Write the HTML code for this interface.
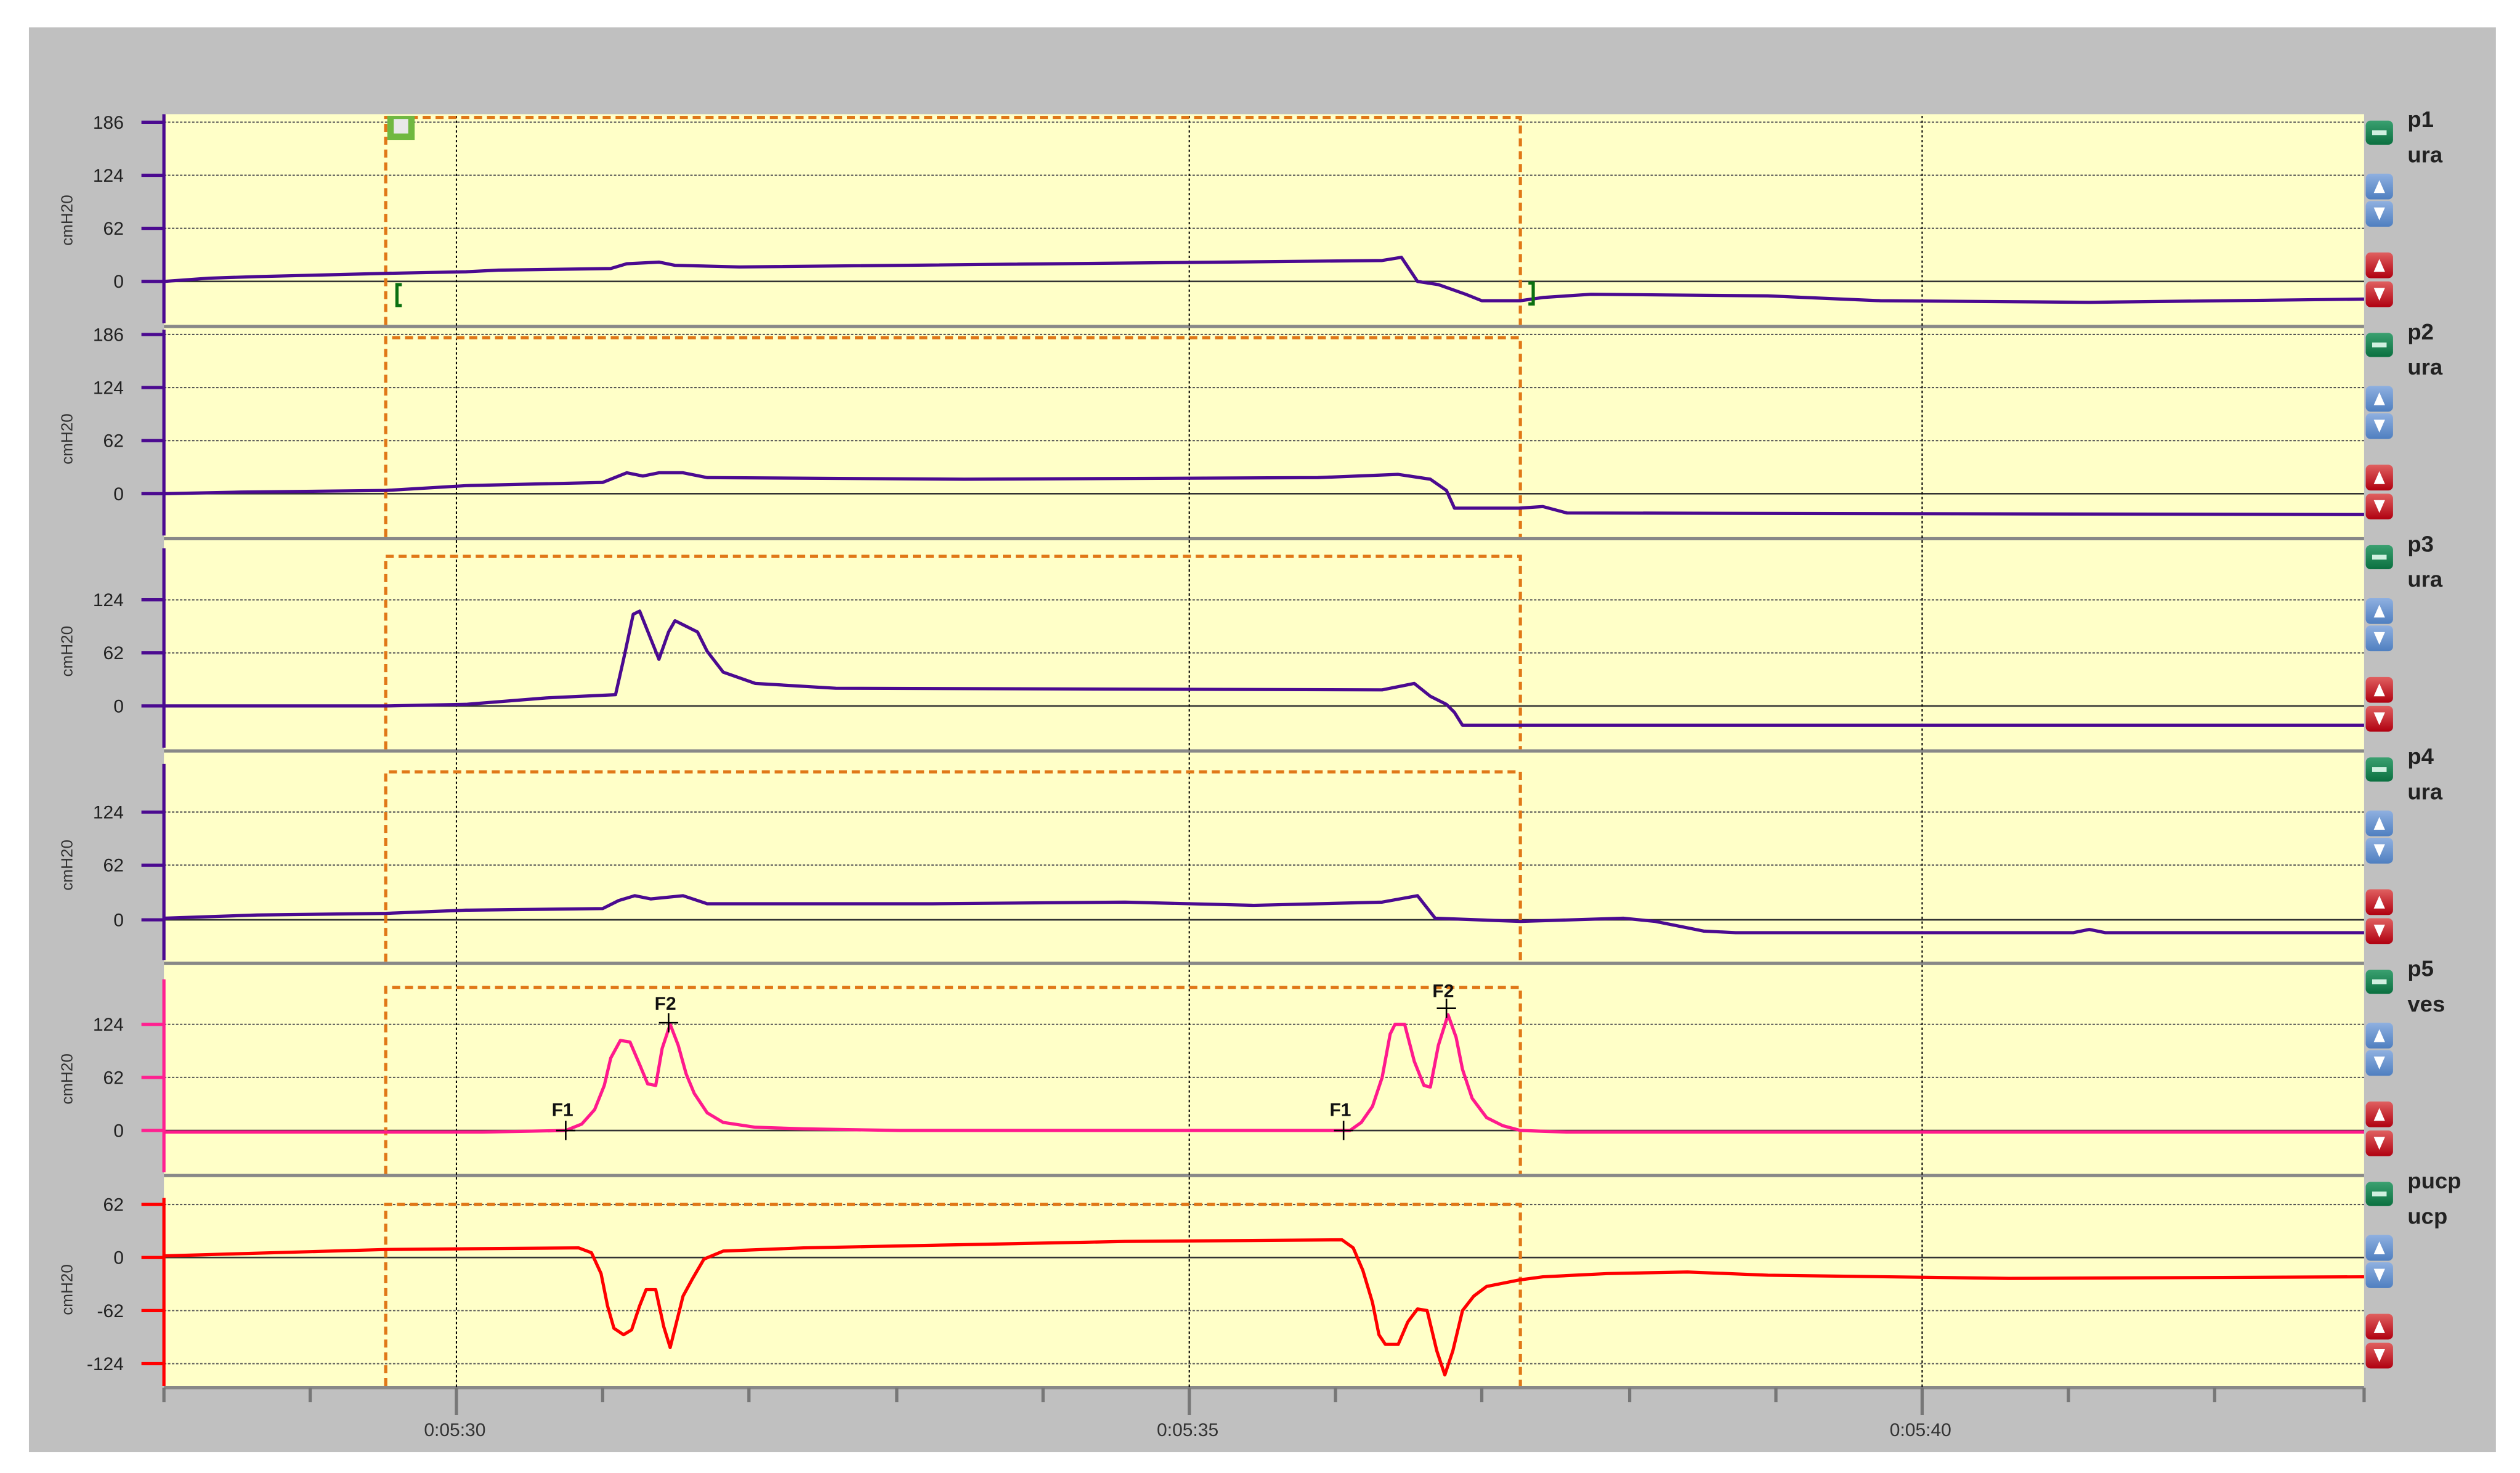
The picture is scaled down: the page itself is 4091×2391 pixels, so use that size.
<!DOCTYPE html>
<html><head><meta charset="utf-8"><style>
html,body{margin:0;padding:0;background:#fff;}
svg{display:block;}
text{font-family:"Liberation Sans",sans-serif;}
</style></head><body>
<svg width="4091" height="2391" viewBox="0 0 1568 916" preserveAspectRatio="none" xmlns="http://www.w3.org/2000/svg">
<defs>
<linearGradient id="gg" x1="0" y1="0" x2="0" y2="1"><stop offset="0" stop-color="#3aa070"/><stop offset="1" stop-color="#0b7040"/></linearGradient>
<linearGradient id="bg" x1="0" y1="0" x2="0" y2="1"><stop offset="0" stop-color="#8fb0e0"/><stop offset="1" stop-color="#4f7fc0"/></linearGradient>
<linearGradient id="rg" x1="0" y1="0" x2="0" y2="1"><stop offset="0" stop-color="#e06060"/><stop offset="1" stop-color="#b00010"/></linearGradient>
<g id="btns">
<rect x="1472" y="4" width="17" height="15" rx="3" fill="url(#gg)"/><rect x="1476" y="10" width="9" height="3" fill="#d0f0e0"/>
<rect x="1472" y="37" width="17" height="16" rx="3" fill="url(#bg)"/><path d="M1477 49 L1480.5 41 L1484 49Z" fill="#fff"/>
<rect x="1472" y="54" width="17" height="16" rx="3" fill="url(#bg)"/><path d="M1477 58 L1480.5 66 L1484 58Z" fill="#fff"/>
<rect x="1472" y="86" width="17" height="16" rx="3" fill="url(#rg)"/><path d="M1477 98 L1480.5 90 L1484 98Z" fill="#fff"/>
<rect x="1472" y="104" width="17" height="16" rx="3" fill="url(#rg)"/><path d="M1477 108 L1480.5 116 L1484 108Z" fill="#fff"/>
</g>
<g id="vgrid" stroke="#000" stroke-width="0.8" stroke-dasharray="1.5,1.5">
<line x1="284" y1="0" x2="284" y2="131"/><line x1="740" y1="0" x2="740" y2="131"/><line x1="1196" y1="0" x2="1196" y2="131"/>
</g>
</defs>
<rect x="18" y="17" width="1535" height="886" fill="#c0c0c0"/>
<rect x="102" y="71" width="1369" height="792" fill="#ffffc8"/>

<g stroke="#888" stroke-width="2">
<line x1="102" y1="203" x2="1471" y2="203"/><line x1="102" y1="335" x2="1471" y2="335"/><line x1="102" y1="467" x2="1471" y2="467"/><line x1="102" y1="599" x2="1471" y2="599"/><line x1="102" y1="731" x2="1471" y2="731"/><line x1="102" y1="863" x2="1471" y2="863"/>
</g>

<g stroke="#555" stroke-width="0.8" stroke-dasharray="1.5,1">
<line x1="102" y1="76" x2="1471" y2="76"/><line x1="102" y1="109" x2="1471" y2="109"/><line x1="102" y1="142" x2="1471" y2="142"/>
<line x1="102" y1="208" x2="1471" y2="208"/><line x1="102" y1="241" x2="1471" y2="241"/><line x1="102" y1="274" x2="1471" y2="274"/>
<line x1="102" y1="373" x2="1471" y2="373"/><line x1="102" y1="406" x2="1471" y2="406"/>
<line x1="102" y1="505" x2="1471" y2="505"/><line x1="102" y1="538" x2="1471" y2="538"/>
<line x1="102" y1="637" x2="1471" y2="637"/><line x1="102" y1="670" x2="1471" y2="670"/>
<line x1="102" y1="749" x2="1471" y2="749"/><line x1="102" y1="815" x2="1471" y2="815"/><line x1="102" y1="848" x2="1471" y2="848"/>
</g>
<g stroke="#333" stroke-width="1">
<line x1="102" y1="175" x2="1471" y2="175"/><line x1="102" y1="307" x2="1471" y2="307"/><line x1="102" y1="439" x2="1471" y2="439"/><line x1="102" y1="572" x2="1471" y2="572"/><line x1="102" y1="703" x2="1471" y2="703"/><line x1="102" y1="782" x2="1471" y2="782"/>
</g>

<use href="#vgrid" y="72"/><use href="#vgrid" y="204"/><use href="#vgrid" y="336"/><use href="#vgrid" y="468"/><use href="#vgrid" y="600"/><use href="#vgrid" y="732"/>
<g fill="none" stroke="#e07818" stroke-width="2" stroke-dasharray="5,3">
<path d="M240 202 L240 73 L946 73 L946 202"/>
<path d="M240 334 L240 210 L946 210 L946 334"/>
<path d="M240 466 L240 346 L946 346 L946 466"/>
<path d="M240 598 L240 480 L946 480 L946 598"/>
<path d="M240 730 L240 614 L946 614 L946 730"/>
<path d="M240 862 L240 749 L946 749 L946 862"/>
</g>

<g stroke-width="2">
<g stroke="#4b0a90"><line x1="102" y1="71" x2="102" y2="201"/><line x1="102" y1="205" x2="102" y2="333"/><line x1="102" y1="341" x2="102" y2="465"/><line x1="102" y1="475" x2="102" y2="597"/>
<path d="M88 76H102M88 109H102M88 142H102M88 175H102M88 208H102M88 241H102M88 274H102M88 307H102M88 373H102M88 406H102M88 439H102M88 505H102M88 538H102M88 572H102"/></g>
<g stroke="#ff2090"><line x1="102" y1="609" x2="102" y2="729"/><path d="M88 637H102M88 670H102M88 703H102"/></g>
<g stroke="#f00"><line x1="102" y1="745" x2="102" y2="862"/><path d="M88 749H102M88 782H102M88 815H102M88 848H102"/></g>
</g>
<g font-size="11.5" fill="#222" text-anchor="end">
<text x="77" y="80">186</text><text x="77" y="113">124</text><text x="77" y="146">62</text><text x="77" y="179">0</text>
<text x="77" y="212">186</text><text x="77" y="245">124</text><text x="77" y="278">62</text><text x="77" y="311">0</text>
<text x="77" y="377">124</text><text x="77" y="410">62</text><text x="77" y="443">0</text>
<text x="77" y="509">124</text><text x="77" y="542">62</text><text x="77" y="576">0</text>
<text x="77" y="641">124</text><text x="77" y="674">62</text><text x="77" y="707">0</text>
<text x="77" y="753">62</text><text x="77" y="786">0</text><text x="77" y="819">-62</text><text x="77" y="852">-124</text>
</g>
<g font-size="10" fill="#333" text-anchor="middle">
<text transform="translate(45,137) rotate(-90)">cmH20</text>
<text transform="translate(45,273) rotate(-90)">cmH20</text>
<text transform="translate(45,405) rotate(-90)">cmH20</text>
<text transform="translate(45,538) rotate(-90)">cmH20</text>
<text transform="translate(45,671) rotate(-90)">cmH20</text>
<text transform="translate(45,802) rotate(-90)">cmH20</text>
</g>

<g stroke="#777" stroke-width="2">
<path d="M102 863V872M193 863V872M375 863V872M466 863V872M558 863V872M649 863V872M831 863V872M922 863V872M1014 863V872M1105 863V872M1287 863V872M1378 863V872M1471 863V872M284 863V880M740 863V880M1196 863V880"/>
</g>
<g font-size="11.5" fill="#333" text-anchor="middle">
<text x="283" y="893">0:05:30</text><text x="739" y="893">0:05:35</text><text x="1195" y="893">0:05:40</text>
</g>

<g fill="none" stroke-width="2" stroke-linejoin="round">
<polyline stroke="#4b0a90" points="102,175 130,173 160,172 200,171 240,170 290,169 310,168 380,167 390,164 410,163 420,165 460,166 860,162 872,160 882,175 895,177 912,183 922,187 946,187 960,185 990,183 1100,184 1170,187 1300,188 1471,186"/>
<polyline stroke="#4b0a90" points="102,307 150,306 240,305 290,302 375,300 390,294 400,296 410,294 425,294 440,297 600,298 820,297 870,295 890,298 900,305 905,316 945,316 960,315 975,319 1471,320"/>
<polyline stroke="#4b0a90" points="102,439 240,439 290,438 340,434 383,432 388,410 394,382 398,380 404,395 410,410 416,393 420,386 426,389 434,393 440,405 450,418 470,425 520,428 860,429 880,425 890,433 900,438 905,443 910,451 1471,451"/>
<polyline stroke="#4b0a90" points="102,571 160,569 240,568 290,566 375,565 385,560 395,557 405,559 425,557 440,562 580,562 700,561 780,563 860,561 882,557 893,571 946,573 1010,571 1030,573 1060,579 1080,580 1290,580 1300,578 1310,580 1471,580"/>
<polyline stroke="#ff1a8c" points="102,704 300,704 352,703 362,699 370,690 376,675 380,658 386,647 392,648 398,662 403,674 408,675 412,652 417,637 422,650 427,668 432,680 440,692 450,698 470,701 500,702 560,703 700,703 840,703 847,698 854,688 860,670 865,643 868,637 874,637 880,660 886,675 890,676 895,650 901,631 906,645 910,665 916,683 925,695 935,700 946,703 975,704 1471,704"/>
<polyline stroke="#f00" points="102,781 240,777 360,776 368,779 374,792 378,812 382,826 388,830 393,827 398,812 402,802 408,802 413,825 417,838 421,822 425,806 431,795 438,783 450,778 500,776 600,774 700,772 835,771 842,776 848,790 854,810 858,830 862,836 870,836 876,822 882,814 888,815 894,840 899,855 904,840 910,815 917,806 925,800 945,796 960,794 1000,792 1050,791 1100,793 1250,795 1471,794"/>
</g>

<g stroke="#000" stroke-width="1"><path d="M346 703H358M352 697V709M410 636H422M416 630V642M830 703H842M836 697V709M894 627H906M900 621V633"/></g>
<g font-size="11.5" font-weight="bold" fill="#111" text-anchor="middle">
<text x="350" y="694">F1</text><text x="414" y="628">F2</text><text x="834" y="694">F1</text><text x="898" y="620">F2</text>
</g>
<g stroke="#0a7010" stroke-width="2" fill="none"><path d="M250 177H247V190H250M951 176H954V189H951"/></g>
<rect x="241" y="72" width="17" height="15" fill="#70b840"/><rect x="245" y="74" width="9" height="9" fill="#e8e8e8"/>

<use href="#btns" y="71"/><use href="#btns" y="203"/><use href="#btns" y="335"/><use href="#btns" y="467"/><use href="#btns" y="599"/><use href="#btns" y="731"/>
<g font-size="14" font-weight="bold" fill="#222">
<text x="1498" y="79">p1</text><text x="1498" y="101">ura</text>
<text x="1498" y="211">p2</text><text x="1498" y="233">ura</text>
<text x="1498" y="343">p3</text><text x="1498" y="365">ura</text>
<text x="1498" y="475">p4</text><text x="1498" y="497">ura</text>
<text x="1498" y="607">p5</text><text x="1498" y="629">ves</text>
<text x="1498" y="739">pucp</text><text x="1498" y="761">ucp</text>
</g>
</svg>
</body></html>
